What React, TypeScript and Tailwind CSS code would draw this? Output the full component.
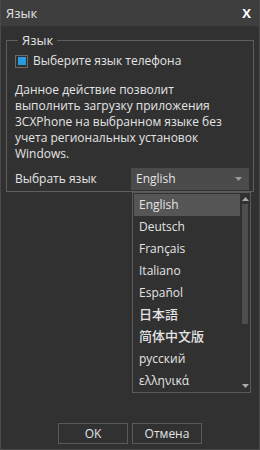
import { useState } from 'react';

const languages = [
  'English',
  'Deutsch',
  'Français',
  'Italiano',
  'Español',
  '日本語',
  '简体中文版',
  'русский',
  'ελληνικά',
];

const font = 'font-["Open_Sans","Noto_Sans_CJK_JP",sans-serif]';

export default function App() {
  const [selected] = useState('English');

  return (
    <div className={`relative w-[260px] h-[450px] flex flex-col bg-[#313131] border-r border-b border-l border-[#4a4a4a] text-[#e4e4e4] ${font}`}>
      {/* Title bar */}
      <div className="h-[26px] shrink-0 bg-[#3e3e3e] flex items-center justify-between pl-[5px] pr-[8px]">
        <span className="text-[13px] leading-none">Язык</span>
        <span className="text-[13px] font-bold leading-none text-white">X</span>
      </div>

      {/* Group box */}
      <div className="px-[5px] pt-[7px]">
        <fieldset className="border border-[#5e5e5e] px-[8px] pb-[1px]">
          <legend className="ml-[3px] px-[4px] text-[13px] leading-[14px]">Язык</legend>

          <label className="flex items-center gap-[5px] mt-[6px]">
            <span className="w-[13px] h-[13px] border border-[#6a6a6a] flex items-center justify-center">
              <span className="w-[8px] h-[8px] bg-[#2a9be0]" />
            </span>
            <span className="text-[12px] leading-[16px]">Выберите язык телефона</span>
          </label>

          <p className="mt-[13px] text-[12px] leading-[16px] pr-[20px]">
            Данное действие позволит выполнить загрузку приложения 3CXPhone на выбранном языке без учета региональных установок Windows.
          </p>

          <div className="mt-[6px] flex items-center justify-between">
            <span className="text-[12px]">Выбрать язык</span>
            <div className="w-[118px] h-[22px] bg-[#4b4b4b] flex items-center justify-between pl-[5px] pr-[7px] -mr-[4px]">
              <span className="text-[12px]">{selected}</span>
              <svg width="7" height="4" viewBox="0 0 7 4"><path d="M0 0h7L3.5 4z" fill="#9a9a9a" /></svg>
            </div>
          </div>
        </fieldset>
      </div>

      {/* Buttons */}
      <div className="mt-auto mb-[5px] flex justify-center gap-[4px]">
        <button className="w-[70px] h-[21px] border border-[#5a5a5a] text-[12px]">OK</button>
        <button className="w-[70px] h-[21px] border border-[#5a5a5a] text-[12px]">Отмена</button>
      </div>

      {/* Opened dropdown list */}
      <div className="absolute left-[131px] top-[192px] w-[119px] h-[201px] bg-[#313131] border border-[#5a5a5a] flex">
        <div className="flex-1 pt-[1px] pl-[1px]">
          {languages.map((lang) => (
            <div
              key={lang}
              className={`h-[22px] flex items-center pl-[5px] text-[12px] ${
                lang === selected ? 'bg-[#565656]' : ''
              } ${lang === '日本語' || lang === '简体中文版' ? 'font-medium text-[13px]' : ''}`}
            >
              {lang}
            </div>
          ))}
        </div>
        <div className="w-[10px] flex flex-col items-center pt-[4px] pb-[4px]">
          <svg width="7" height="4" viewBox="0 0 7 4"><path d="M0 4h7L3.5 0z" fill="#aaaaaa" /></svg>
          <div className="w-[6px] h-[120px] bg-[#4e4e4e] mt-[3px]" />
          <div className="flex-1" />
          <svg width="7" height="4" viewBox="0 0 7 4"><path d="M0 0h7L3.5 4z" fill="#aaaaaa" /></svg>
        </div>
      </div>
    </div>
  );
}
